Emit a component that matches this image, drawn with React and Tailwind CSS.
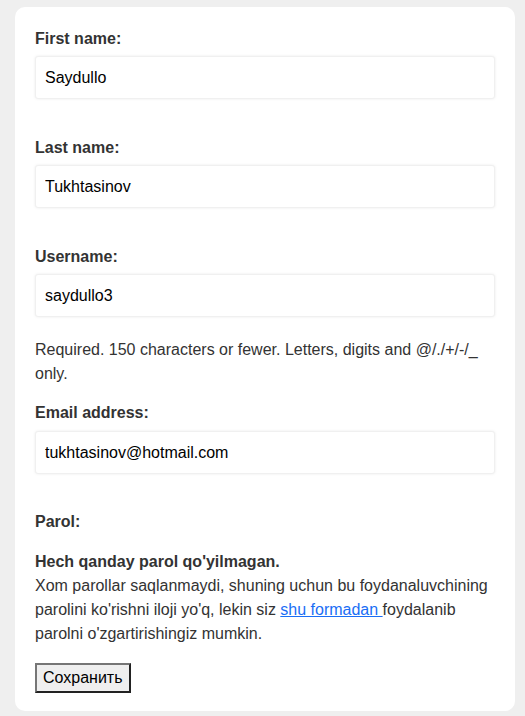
export default function App() {
  const font = { fontFamily: '"Liberation Sans", Arial, sans-serif' };
  const Label = ({ children }) => (
    <div className="h-[24px] leading-[24px] text-[16px] font-bold text-[#333] mb-[5px]">{children}</div>
  );
  const Input = ({ value }) => (
    <input
      readOnly
      value={value}
      className="block w-[460px] h-[43px] px-[9px] text-[16px] text-black bg-white border border-[#f0f0f0] rounded-[3px] shadow-[0_0_3px_rgba(0,0,0,0.08)] outline-none"
      style={font}
    />
  );
  return (
    <div className="min-h-[716px] bg-[#efefef] pt-[7px] pl-[15px]" style={font}>
      <div className="w-[500px] bg-white rounded-[10px] px-[20px] pt-[20px] pb-[18px] text-[16px] text-[#333]">
        <Label>First name:</Label>
        <Input value="Saydullo" />
        <div className="h-[37px]" />
        <Label>Last name:</Label>
        <Input value="Tukhtasinov" />
        <div className="h-[37px]" />
        <Label>Username:</Label>
        <Input value="saydullo3" />
        <div className="mt-[21px] leading-[24px]">
          Required. 150 characters or fewer. Letters, digits and @/./+/-/_ only.
        </div>
        <div className="h-[15px]" />
        <div className="h-[24px] leading-[24px] text-[16px] font-bold text-[#333] mb-[6px]">Email address:</div>
        <Input value="tukhtasinov@hotmail.com" />
        <div className="h-[36px]" />
        <div className="h-[24px] leading-[24px] font-bold">Parol:</div>
        <div className="mt-[16px] leading-[24px]">
          <div className="font-bold">Hech qanday parol qo'yilmagan.</div>
          <div>
            Xom parollar saqlanmaydi, shuning uchun bu foydanaluvchining parolini ko'rishni iloji yo'q, lekin siz{' '}
            <a href="#" className="text-[#1a6ef5] underline">shu formadan </a>
            foydalanib parolni o'zgartirishingiz mumkin.
          </div>
        </div>
        <button
          className="mt-[17px] h-[30px] px-[6px] text-[16px] text-black bg-[#efefef] border-2 border-t-[#767676] border-l-[#767676] border-r-[#222] border-b-[#222] leading-[20px]"
          style={font}
        >
          Сохранить
        </button>
      </div>
    </div>
  );
}
